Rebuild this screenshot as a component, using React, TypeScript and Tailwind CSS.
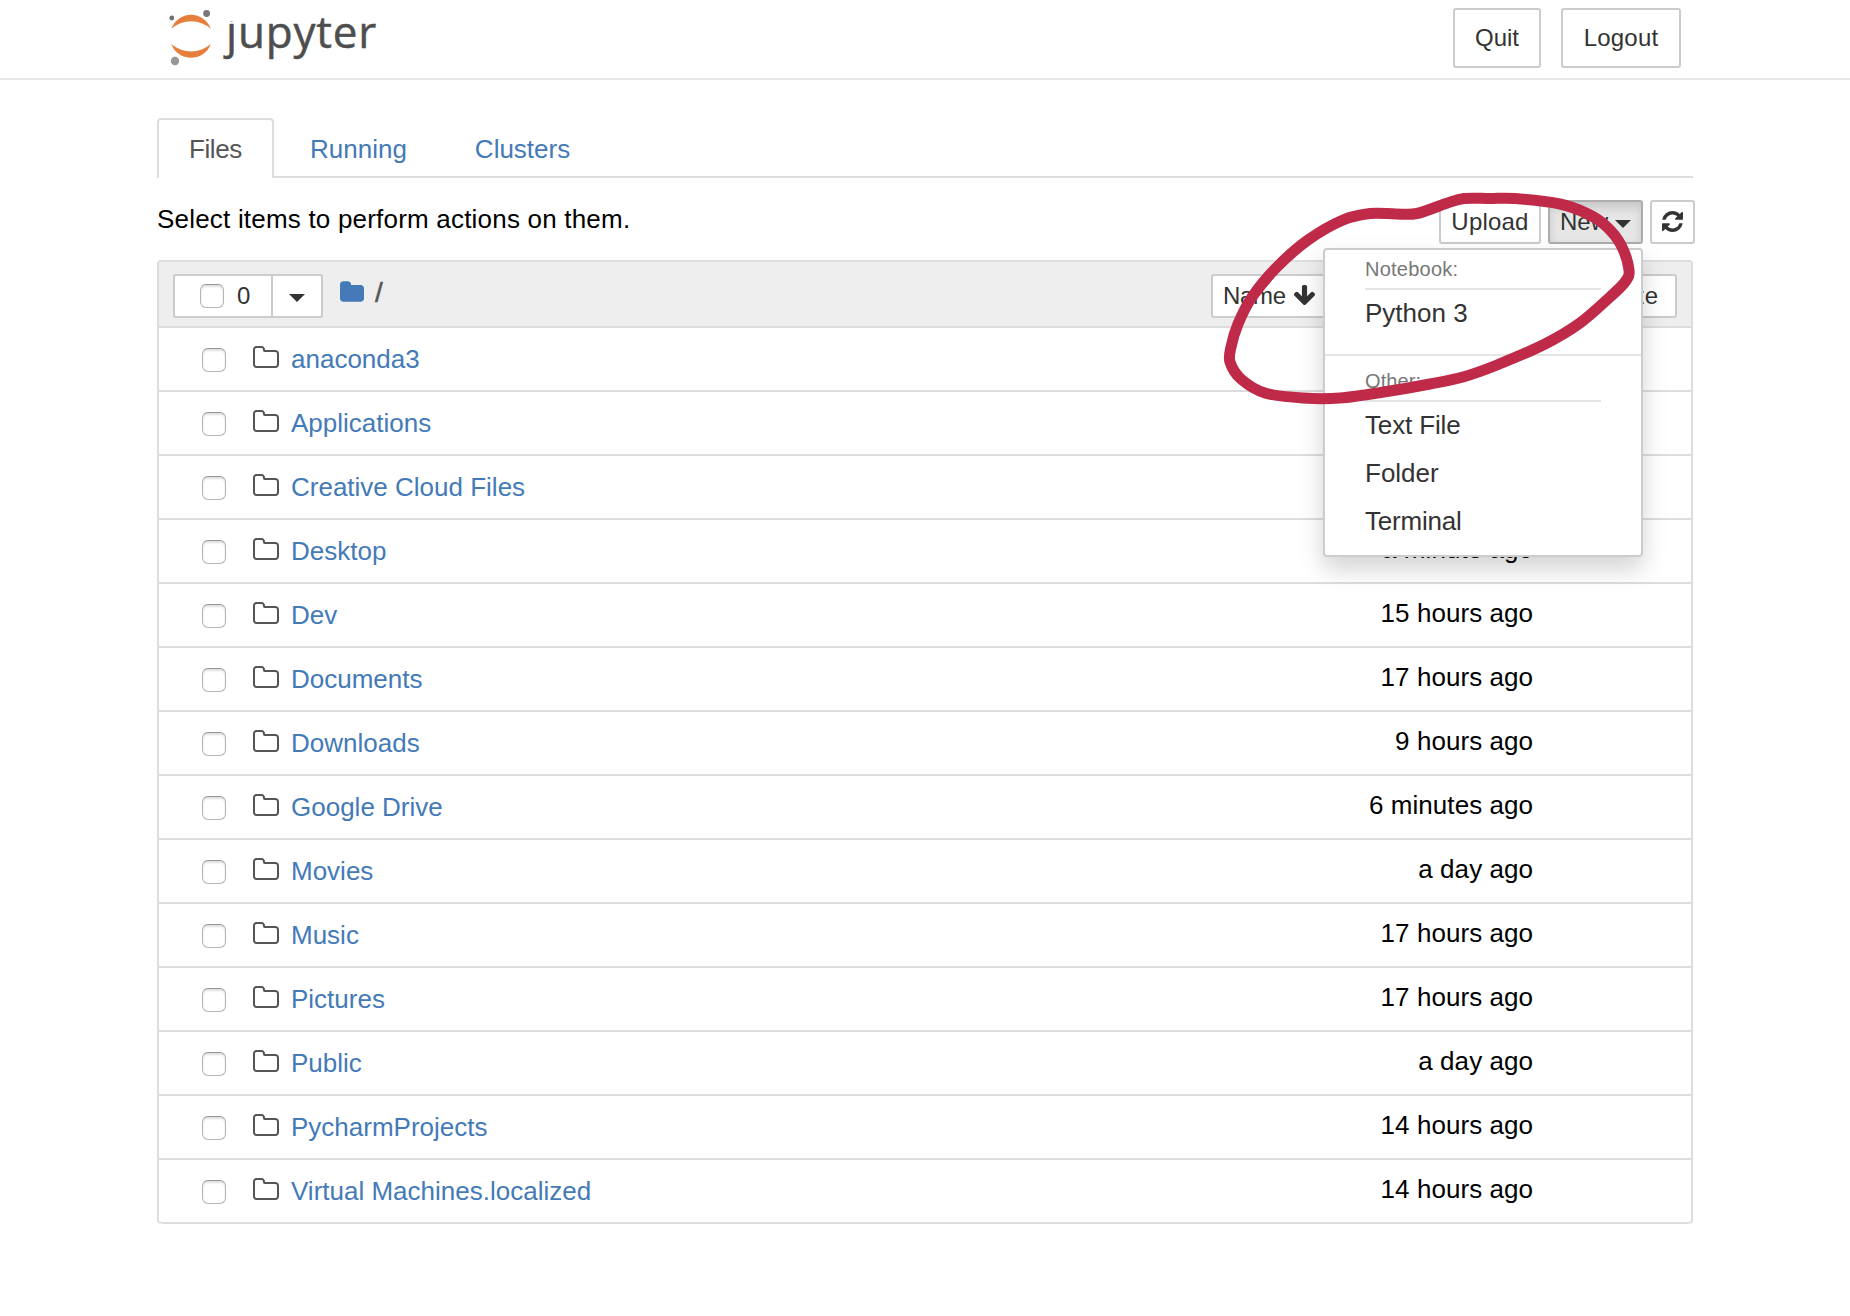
import React from "react";

type Entry = { name: string; modified: string };

const entries: Entry[] = [
  { name: "anaconda3", modified: "" },
  { name: "Applications", modified: "" },
  { name: "Creative Cloud Files", modified: "" },
  { name: "Desktop", modified: "a minute ago" },
  { name: "Dev", modified: "15 hours ago" },
  { name: "Documents", modified: "17 hours ago" },
  { name: "Downloads", modified: "9 hours ago" },
  { name: "Google Drive", modified: "6 minutes ago" },
  { name: "Movies", modified: "a day ago" },
  { name: "Music", modified: "17 hours ago" },
  { name: "Pictures", modified: "17 hours ago" },
  { name: "Public", modified: "a day ago" },
  { name: "PycharmProjects", modified: "14 hours ago" },
  { name: "Virtual Machines.localized", modified: "14 hours ago" },
];

function FolderOutline() {
  return (
    <svg viewBox="0 128 1664 1408" className="h-[22px] w-[26px] fill-[#555]">
      <path d="M1536 1312v-704q0-40-28-68t-68-28h-704q-40 0-68-28t-28-68v-64q0-40-28-68t-68-28h-320q-40 0-68 28t-28 68v960q0 40 28 68t68 28h1216q40 0 68-28t28-68zm128-704v704q0 92-66 158t-158 66h-1216q-92 0-158-66t-66-158v-960q0-92 66-158t158-66h320q92 0 158 66t66 158v32h672q92 0 158 66t66 158z" />
    </svg>
  );
}

function FolderSolid() {
  return (
    <svg viewBox="0 128 1664 1408" className="mt-[19px] h-[21px] w-6 fill-[#447ab7]">
      <path d="M1664 608v704q0 92-66 158t-158 66h-1216q-92 0-158-66t-66-158v-960q0-92 66-158t158-66h320q92 0 158 66t66 158v32h672q92 0 158 66t66 158z" />
    </svg>
  );
}

function RefreshIcon() {
  return (
    <svg viewBox="0 128 1536 1536" className="-mt-[2px] h-[21px] w-[21px] fill-[#333]">
      <path d="M1511 1056q0 5-1 7-64 268-268 434.5t-478 166.5q-146 0-282.5-55t-243.5-157l-129 129q-19 19-45 19t-45-19-19-45v-448q0-26 19-45t45-19h448q26 0 45 19t19 45-19 45l-137 137q71 66 161 102t187 36q134 0 250-65t186-179q11-17 53-117 8-23 30-23h192q13 0 22.5 9.5t9.5 22.5zm25-800v448q0 26-19 45t-45 19h-448q-26 0-45-19t-19-45 19-45l138-138q-148-137-349-137-134 0-250 65t-186 179q-11 17-53 117-8 23-30 23h-199q-13 0-22.5-9.5t-9.5-22.5v-7q65-268 270-434.5t480-166.5q146 0 284 55.5t245 156.5l130-129q19-19 45-19t45 19 19 45z" />
    </svg>
  );
}

function ArrowDown() {
  return (
    <svg viewBox="53 128 1558 1483" className="-mt-[2px] h-[20px] w-[21px] fill-[#333]">
      <path d="M1611 832q0 53-37 90l-651 652q-39 37-91 37-53 0-90-37l-651-652q-38-36-38-90 0-53 38-91l74-75q39-37 91-37 53 0 90 37l294 294v-704q0-52 38-90t90-38h128q52 0 90 38t38 90v704l294-294q37-37 90-37 52 0 91 37l75 75q37 39 37 91z" />
    </svg>
  );
}

function Caret() {
  return (
    <svg viewBox="0 0 16 8" className="h-2 w-4 fill-[#333]">
      <path d="M0 0h16L8 8z" />
    </svg>
  );
}

function Checkbox() {
  return (
    <span className="block h-6 w-6 shrink-0 rounded-[6px] border border-[#b4b4b4] border-t-[#969696] bg-white shadow-[inset_0_2px_2px_rgba(0,0,0,0.12)]" />
  );
}

function Logo() {
  return (
    <div className="flex h-[78px] pl-[10px]">
      <svg viewBox="167 0 48 78" className="h-[78px] w-12">
        <path d="M171.3 28.7A21 21 0 0 1 210.8 28.7A30 30 0 0 0 171.3 28.7z" fill="#e67e3c" />
        <path d="M171.3 44A21 21 0 0 0 210.8 44A30 30 0 0 1 171.3 44z" fill="#e67e3c" />
        <circle cx="206.6" cy="13.5" r="3.4" fill="#767677" />
        <circle cx="171.8" cy="18" r="2.4" fill="#707071" />
        <circle cx="175" cy="61" r="4.2" fill="#989798" />
      </svg>
      <span className="ml-[11px] flex font-['Open_Sans',sans-serif] text-[44px] leading-[63px] tracking-[0.8px] text-[#4e4e4e] [-webkit-text-stroke:0.5px_#4e4e4e]">
        <span className="block [clip-path:inset(21px_-10px_0_-20px)]">j</span>upyter
      </span>
    </div>
  );
}

const button =
  "flex items-center rounded-[3px] border-2 border-[#ccc] bg-white text-2xl text-[#333] whitespace-nowrap";

function NewMenu() {
  return (
    <div className="absolute right-0 top-[48px] z-10 h-[309px] w-[320px] rounded-[4px] border-2 border-[#ccc] bg-white pt-[6px] text-[26px] text-[#333] shadow-[0_12px_24px_rgba(0,0,0,0.175)]">
      <div className="mx-10 h-[34px] border-b-2 border-[#e5e5e5] text-[20px] leading-[26px] tracking-[0.25px] text-[#777]">Notebook:</div>
      <div className="px-10 leading-[47px]">Python 3</div>
      <div className="mt-[17px] h-[2px] bg-[#e5e5e5]" />
      <div className="mx-10 mt-[12px] h-[34px] border-b-2 border-[#e5e5e5] text-[20px] leading-[26px] tracking-[0.1px] text-[#777]">Other:</div>
      <div className="-mt-px px-10 leading-[48px] tracking-[-0.15px]">Text File</div>
      <div className="px-10 leading-[48px]">Folder</div>
      <div className="px-10 leading-[48px] tracking-[-0.2px]">Terminal</div>
    </div>
  );
}

const strokePoints: [number, number][] = [
  [1515, 198.5], [1490, 198.5], [1464, 198.5], [1446, 203.5], [1417, 213.5], [1396, 214], [1370, 213.5], [1343, 220], [1308, 240],
  [1277, 267], [1252, 297], [1238, 324], [1231, 347], [1230, 362], [1241, 379], [1265, 393],
  [1303, 398], [1340, 398], [1387, 391.5], [1430, 384], [1463, 377], [1497, 365], [1545, 344],
  [1580, 323], [1610, 297], [1625, 282], [1629, 270], [1621, 245], [1606, 226], [1587, 213.5],
  [1560, 204],
];

/* Closed Catmull-Rom curve through the hand-drawn marker points. */
function smooth(points: [number, number][]) {
  const n = points.length;
  let d = `M${points[0][0]} ${points[0][1]}`;
  for (let i = 0; i < n; i++) {
    const a = points[(i + n - 1) % n];
    const b = points[i];
    const c = points[(i + 1) % n];
    const e = points[(i + 2) % n];
    d += `C${b[0] + (c[0] - a[0]) / 6} ${b[1] + (c[1] - a[1]) / 6} ${c[0] - (e[0] - b[0]) / 6} ${c[1] - (e[1] - b[1]) / 6} ${c[0]} ${c[1]}`;
  }
  return d + "z";
}

function MarkerCircle() {
  return (
    <svg viewBox="0 0 1850 1316" className="pointer-events-none absolute left-0 top-0 z-20 h-[1316px] w-[1850px]">
      <path d={smooth(strokePoints)} fill="none" stroke="#c02a49" strokeWidth="11" strokeLinejoin="round" />
    </svg>
  );
}

export default function App() {
  return (
    <div className="relative h-[1316px] w-[1850px] overflow-hidden bg-white font-['Liberation_Sans',Arial,sans-serif] text-[26px] text-black">
      <header className="h-20 border-b-2 border-[#e7e7e7]">
        <div className="mx-auto flex w-[1536px] justify-between">
          <Logo />
          <div className="flex gap-5 pr-3 pt-2">
            <button className={`${button} h-[60px] w-[88px] justify-center pb-px`}>Quit</button>
            <button className={`${button} h-[60px] w-[120px] justify-center pb-px tracking-[0.2px]`}>Logout</button>
          </div>
        </div>
      </header>

      <main className="mx-auto w-[1536px] pt-[38px]">
        <nav className="flex h-[60px] border-b-2 border-[#ddd] leading-[58px]">
          <div className="h-[60px] w-[117px] rounded-t-[4px] border-2 border-b-0 border-[#ddd] bg-white pl-[30px] tracking-[-0.4px] text-[#555]">Files</div>
          <div className="pl-[36px] pt-[2px] text-[#447ab7]">Running</div>
          <div className="pl-[68px] pt-[2px] text-[#447ab7]">Clusters</div>
        </nav>

        <div className="flex h-[82px] justify-between">
          <div className="pt-[26px] leading-[30px] tracking-[0.2px]">Select items to perform actions on them.</div>
          <div className="-mr-[2px] flex pt-[22px]">
            <button className={`${button} h-11 w-[102px] justify-center pb-px tracking-[0.2px]`}>Upload</button>
            <div className="relative ml-[7px] h-11">
              <button className="flex h-11 w-[95px] items-center rounded-[3px] border-2 border-[#adadad] bg-[#e6e6e6] pl-[10px] text-2xl text-[#333] shadow-[inset_0_6px_10px_rgba(0,0,0,0.125)]">
                <span className="pb-px">New</span>
                <span className="ml-auto mr-[10px] pt-1"><Caret /></span>
              </button>
              <NewMenu />
            </div>
            <button className={`${button} ml-[7px] h-11 w-[45px] justify-center`}><RefreshIcon /></button>
          </div>
        </div>

        <section className="rounded-[4px] border-2 border-b-0 border-[#ddd]">
          <div className="flex h-[66px] justify-between border-b-2 border-[#ddd] bg-[#eee] pl-[14px] pr-[14px]">
            <div className="flex">
              <div className="mt-3 flex h-11 w-[150px] rounded-[3px] border-2 border-[#ccc] bg-white text-2xl text-[#333]">
                <div className="flex w-[98px] border-r-2 border-[#ccc] pl-[25px] pt-2">
                  <Checkbox />
                  <span className="ml-[13px] leading-6">0</span>
                </div>
                <div className="flex flex-1 justify-center pt-[18px]"><Caret /></div>
              </div>
              <div className="ml-[17px] flex">
                <FolderSolid />
                <span className="ml-[11px] pt-[17px] text-[28px] leading-7 text-[#555] [-webkit-text-stroke:0.5px_#555]">/</span>
              </div>
            </div>
            <div className="flex pt-3">
              <button className={`${button} h-11 w-[124px] gap-[8px] pl-[10px] tracking-[-0.3px]`}><span className="pb-px">Name</span><ArrowDown /></button>
              <button className={`${button} ml-px h-11 w-[236px]`} aria-label="Last Modified" />
              <button className={`${button} ml-px h-11 w-[104px] justify-end pr-[17px]`}><span className="pb-px">File size</span></button>
            </div>
          </div>
          {entries.map((e) => (
            <div key={e.name} className="flex h-16 border-b-2 border-[#ddd] pl-[43px] last:rounded-b-[4px]">
              <div className="pt-5"><Checkbox /></div>
              <div className="ml-[27px] pt-[18px]"><FolderOutline /></div>
              <div className="ml-3 pt-4 leading-[30px] text-[#447ab7]">{e.name}</div>
              <div className="ml-auto pr-[158px] pt-[14px] leading-[30px] tracking-[0.05px]">{e.modified}</div>
            </div>
          ))}
        </section>
      </main>
      <MarkerCircle />
    </div>
  );
}
